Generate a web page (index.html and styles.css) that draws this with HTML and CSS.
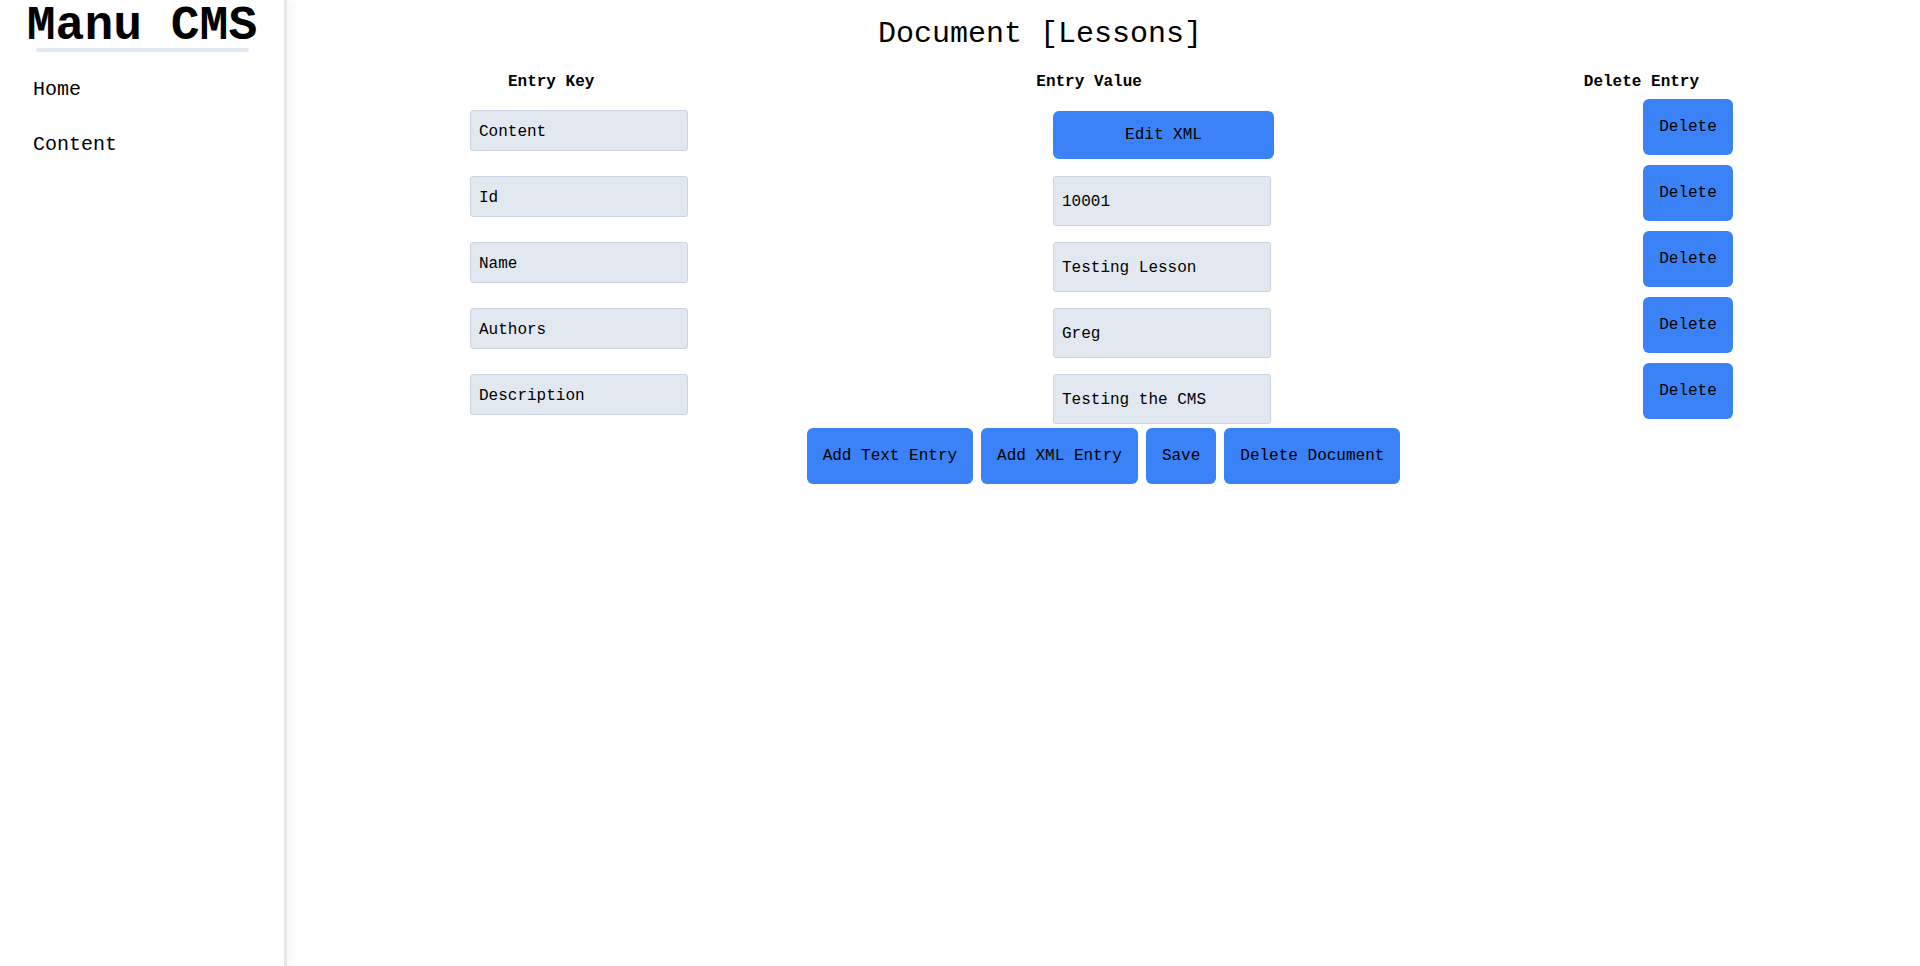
FILE: index.html
```html
<!DOCTYPE html>
<html lang="en">
<head>
<meta charset="utf-8">
<title>Manu CMS</title>
<link rel="stylesheet" href="styles.css">
</head>
<body>
<div class="app">
  <aside class="sidebar">
    <h1 class="brand">Manu CMS</h1>
    <div class="brand-rule"></div>
    <nav class="nav">
      <a class="nav-link" href="#">Home</a>
      <a class="nav-link" href="#">Content</a>
    </nav>
  </aside>
  <main class="main">
    <h2 class="doc-title">Document [Lessons]</h2>
    <div class="col-heads">
      <span class="col-head">Entry Key</span>
      <span class="col-head">Entry Value</span>
      <span class="col-head">Delete Entry</span>
    </div>
    <div class="entries">
      <div class="entry">
        <input class="field field-key" type="text" value="Content">
        <button class="btn btn-xml" type="button">Edit XML</button>
        <button class="btn btn-del" type="button">Delete</button>
      </div>
      <div class="entry">
        <input class="field field-key" type="text" value="Id">
        <input class="field field-value" type="text" value="10001">
        <button class="btn btn-del" type="button">Delete</button>
      </div>
      <div class="entry">
        <input class="field field-key" type="text" value="Name">
        <input class="field field-value" type="text" value="Testing Lesson">
        <button class="btn btn-del" type="button">Delete</button>
      </div>
      <div class="entry">
        <input class="field field-key" type="text" value="Authors">
        <input class="field field-value" type="text" value="Greg">
        <button class="btn btn-del" type="button">Delete</button>
      </div>
      <div class="entry">
        <input class="field field-key" type="text" value="Description">
        <input class="field field-value" type="text" value="Testing the CMS">
        <button class="btn btn-del" type="button">Delete</button>
      </div>
    </div>
    <div class="actions">
      <button class="btn" type="button">Add Text Entry</button>
      <button class="btn" type="button">Add XML Entry</button>
      <button class="btn" type="button">Save</button>
      <button class="btn" type="button">Delete Document</button>
    </div>
  </main>
</div>
</body>
</html>
```
FILE: styles.css
```css
* { box-sizing: border-box; }

html, body {
  margin: 0;
  padding: 0;
  background: #ffffff;
  color: #000000;
  font-family: "Liberation Mono", "DejaVu Sans Mono", monospace;
  font-size: 16px;
}

.app {
  display: flex;
  min-height: 100vh;
}

.sidebar {
  width: 287px;
  flex-shrink: 0;
  border-right: 3px solid #e5e7eb;
  box-shadow: 3px 0 12px rgba(0, 0, 0, 0.05);
  display: flex;
  flex-direction: column;
  align-items: center;
  min-height: 966px;
}

.brand {
  margin: 0;
  padding-top: 6px;
  font-size: 48px;
  line-height: 40px;
  font-weight: 700;
  text-align: center;
  width: 100%;
}

.brand-rule {
  margin-top: 2px;
  width: 213px;
  height: 4px;
  border-radius: 2px;
  background: #e2e8f0;
}

.nav {
  align-self: stretch;
  margin-top: 24px;
  padding-left: 33px;
  display: flex;
  flex-direction: column;
  gap: 27px;
}

.nav-link {
  display: block;
  color: #000000;
  text-decoration: none;
  font-size: 20px;
  line-height: 28px;
}

.main {
  flex: 1;
  padding-top: 16px;
}

.doc-title {
  margin: 0;
  font-size: 30px;
  line-height: 36px;
  font-weight: 400;
  text-align: center;
  padding-right: 127px;
}

.col-heads {
  margin-top: 18px;
  display: flex;
  justify-content: space-around;
  line-height: 24px;
}

.col-head {
  font-weight: 700;
  font-size: 16px;
}

.entries {
  margin-top: 5px;
  padding-left: 183px;
  display: flex;
  flex-direction: column;
  gap: 5px;
}

.entry {
  display: grid;
  grid-template-columns: 583px 590px 90px;
  align-items: start;
  height: 61px;
}

.field {
  display: block;
  width: 218px;
  margin: 11px 0 0 0;
  padding: 2px 8px 0 8px;
  border: 1px solid #cbd5e1;
  border-radius: 3px;
  background: #e2e8f0;
  color: #000000;
  font-family: inherit;
  font-size: 16px;
  outline: none;
}

.field-key {
  height: 41px;
}

.field-value {
  height: 50px;
}

.btn {
  border: none;
  border-radius: 6px;
  background: #3b82f6;
  color: #000000;
  font-family: inherit;
  font-size: 16px;
  line-height: 24px;
  padding: 16px;
  cursor: pointer;
  white-space: nowrap;
}

.btn-xml {
  width: 221px;
  height: 48px;
  padding: 12px;
  margin-top: 12px;
  text-align: center;
}

.btn-del {
  width: 90px;
  height: 56px;
}

.actions {
  margin-top: 4px;
  display: flex;
  justify-content: center;
  gap: 8px;
}
```
